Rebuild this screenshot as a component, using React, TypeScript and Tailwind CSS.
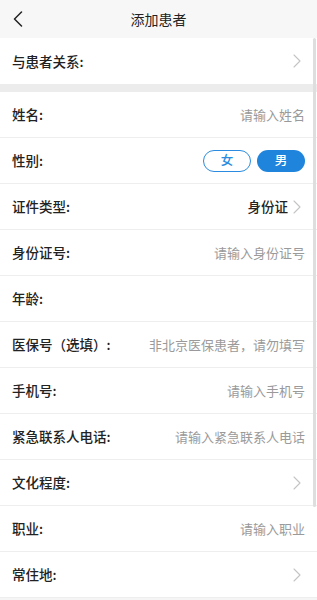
import React from "react";

const Chevron = () => (
  <svg width="8" height="14" viewBox="0 0 8 14" fill="none" className="ml-[5px] mr-[4px]">
    <path d="M1 1l6 6-6 6" stroke="#c4c4c4" strokeWidth="1.1" strokeLinecap="round" strokeLinejoin="round" />
  </svg>
);

const Row = ({ label, right, last }: { label: string; right?: React.ReactNode; last?: boolean }) => (
  <div className={`h-[46px] flex items-center justify-between pl-3 pr-3 bg-white ${last ? "" : "border-b border-[#eeeeee]"}`}>
    <span className="text-[13.5px] font-medium text-[#222]">{label}</span>
    <div className="flex items-center">{right}</div>
  </div>
);

const Ph = ({ t }: { t: string }) => <span className="text-[13px] text-[#9a9a9a]">{t}</span>;

export default function App() {
  return (
    <div className="relative w-[317px] h-[600px] overflow-hidden bg-[#f5f5f5]" style={{ fontFamily: '"Noto Sans CJK SC", "Noto Sans", sans-serif' }}>
      <div className="h-[38px] flex items-center justify-center relative bg-[#f7f7f7]">
        <svg width="10" height="16" viewBox="0 0 10 16" className="absolute left-[13px] top-[11px]" fill="none">
          <path d="M8.5 1L1.5 8l7 7" stroke="#222" strokeWidth="1.5" strokeLinecap="round" strokeLinejoin="round" />
        </svg>
        <span className="text-[14px] text-[#222]">添加患者</span>
      </div>
      <Row label="与患者关系:" right={<Chevron />} last />
      <div className="h-[8px] bg-[#ececec]" />
      <Row label="姓名:" right={<Ph t="请输入姓名" />} />
      <Row
        label="性别:"
        right={
          <div className="flex gap-[6px]">
            <div className="w-[48px] h-[22px] rounded-full border border-[#2b8be0] flex items-center justify-center text-[12.5px] text-[#2b8be0] font-medium">女</div>
            <div className="w-[48px] h-[22px] rounded-full bg-[#1f84dc] flex items-center justify-center text-[12.5px] text-white font-medium">男</div>
          </div>
        }
      />
      <Row label="证件类型:" right={<><span className="text-[13.5px] font-medium text-[#222]">身份证</span><Chevron /></>} />
      <Row label="身份证号:" right={<Ph t="请输入身份证号" />} />
      <Row label="年龄:" />
      <Row label="医保号（选填）:" right={<Ph t="非北京医保患者，请勿填写" />} />
      <Row label="手机号:" right={<Ph t="请输入手机号" />} />
      <Row label="紧急联系人电话:" right={<Ph t="请输入紧急联系人电话" />} />
      <Row label="文化程度:" right={<Chevron />} />
      <Row label="职业:" right={<Ph t="请输入职业" />} />
      <Row label="常住地:" right={<Chevron />} />
      <div className="absolute right-[1px] top-[38px] w-[3px] h-[469px] rounded-full bg-[#dedede]" />
    </div>
  );
}
